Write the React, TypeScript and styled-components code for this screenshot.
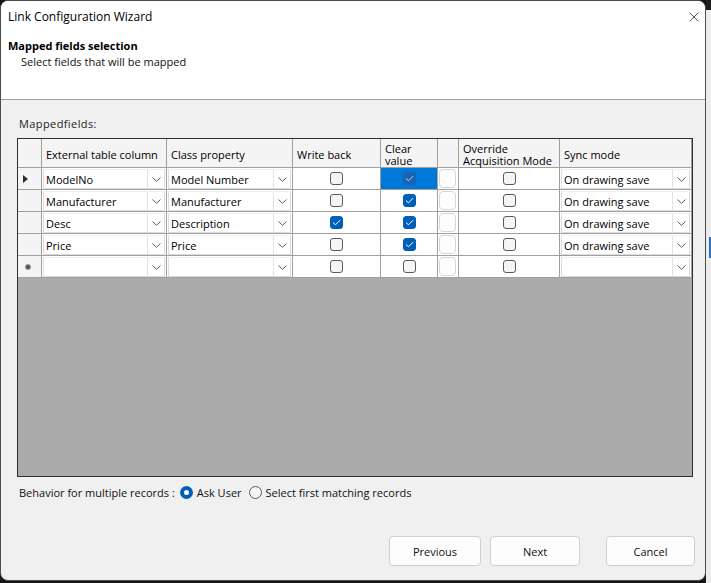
import React from 'react';
import styled, { createGlobalStyle } from 'styled-components';
import { X } from 'lucide-react';

const GlobalStyle = createGlobalStyle`
  html, body {
    margin: 0;
    padding: 0;
    background: #161616;
  }
  body {
    font-family: "Open Sans", "Noto Sans", sans-serif;
    color: #000;
  }
`;

// Page: the dialog plus a sliver of the desktop on the right
const Page = styled.div`
  display: flex;
  width: 711px;
  height: 583px;
  overflow: hidden;
`;

const Desktop = styled.div`
  flex: 1;
  position: relative;
  background: #ececec;
  border-top: 10px solid #1d1d1d;
`;

const DesktopMark = styled.div`
  position: absolute;
  top: 227px;
  left: 3px;
  width: 3px;
  height: 21px;
  background: #2a6fc9;
`;

const Window = styled.div`
  width: 706px;
  height: 581px;
  box-sizing: border-box;
  border: 1px solid #4c4c4c;
  border-radius: 8px;
  overflow: hidden;
  display: flex;
  flex-direction: column;
  background: #f0f0f0;
`;

const Top = styled.div`
  background: #fff;
  height: 98px;
  border-bottom: 1px solid #a0a0a0;
  display: flex;
  flex-direction: column;
`;

const TitleBar = styled.div`
  height: 31px;
  display: flex;
  align-items: center;
  justify-content: space-between;
  padding: 0 3px 0 7px;
  font-size: 12px;
`;

const Heading = styled.div`
  padding: 6px 0 0 7px;
  font-size: 11px;
  font-weight: 700;
  line-height: 16px;
`;

const SubHeading = styled.div`
  padding-left: 20px;
  font-size: 11px;
  line-height: 16px;
  color: #111;
`;

const Body = styled.div`
  flex: 1;
  display: flex;
  flex-direction: column;
  padding: 16px 10px 0 16px;
`;

const Label = styled.div`
  font-size: 11px;
  letter-spacing: 0.4px;
  color: #222;
  padding-left: 2px;
  line-height: 15px;
  margin-bottom: 7px;
`;

const Grid = styled.div`
  width: 676px;
  height: 339px;
  box-sizing: border-box;
  border: 1px solid #2e2e2e;
  background: #ababab;
  display: flex;
  flex-direction: column;
`;

const COLS = '24px 125px 126px 88px 57px 21px 101px 132px';

const Row = styled.div<{ $head?: boolean }>`
  display: grid;
  grid-template-columns: ${COLS};
  height: ${(p) => (p.$head ? 29 : 22)}px;
`;

const Cell = styled.div<{ $head?: boolean; $selected?: boolean; $center?: boolean }>`
  box-sizing: border-box;
  border-right: 1px solid #a0a0a0;
  border-bottom: 1px solid #a0a0a0;
  background: ${(p) => (p.$selected ? '#0078d7' : p.$head ? '#f4f4f4' : '#fff')};
  display: flex;
  align-items: center;
  justify-content: ${(p) => (p.$center ? 'center' : 'flex-start')};
  font-size: 11px;
  line-height: 12px;
  padding: ${(p) => (p.$head ? '3px 4px 0' : '0')};
`;

const RowHead = styled(Cell)`
  background: #f4f4f4;
  justify-content: flex-start;
  padding-left: 5px;
`;

const Arrow = styled.div`
  width: 0;
  height: 0;
  border-top: 4px solid transparent;
  border-bottom: 4px solid transparent;
  border-left: 5px solid #2b2b2b;
`;

const NewMark = styled.div`
  margin-left: 3px;
  width: 4px;
  height: 4px;
  border-radius: 50%;
  background: #555;
  box-shadow: 0 0 0 1px #999;
`;

const Combo = styled.div`
  flex: 1;
  align-self: stretch;
  margin: 1px 1px 0 1px;
  box-sizing: border-box;
  border: 1px solid #dcdcdc;
  border-top-color: #f0f0f0;
  background: #fff;
  display: flex;
  align-items: center;
`;

const ComboText = styled.span`
  flex: 1;
  padding: 1px 0 0 2px;
  font-size: 11px;
  line-height: 14px;
  white-space: nowrap;
`;

const ComboButton = styled.span`
  width: 16px;
  align-self: stretch;
  border-left: 1px solid #e2e2e2;
  display: flex;
  align-items: center;
  justify-content: center;
`;

const Check = styled.div<{ $on?: boolean; $sel?: boolean }>`
  width: 13px;
  height: 13px;
  box-sizing: border-box;
  border-radius: 3px;
  border: 1px solid ${(p) => (p.$sel ? '#1b63b5' : p.$on ? '#005fb8' : '#5a5a5a')};
  background: ${(p) => (p.$sel ? '#1b63b5' : p.$on ? '#005fb8' : '#f5f5f5')};
  display: flex;
  align-items: center;
  justify-content: center;
`;

const CellButton = styled.div`
  width: 17px;
  height: 19px;
  margin-left: 1px;
  box-sizing: border-box;
  border: 1px solid #d6d6d6;
  border-radius: 4px;
  background: #fdfdfd;
`;

const Empty = styled.div`
  flex: 1;
`;

const RadioRow = styled.div`
  display: flex;
  align-items: center;
  height: 16px;
  margin-top: 7px;
  padding-left: 2px;
  font-size: 11px;
  color: #111;
`;

const RadioItem = styled.label`
  display: flex;
  align-items: center;
  gap: 4px;
  margin-left: 7px;
  &:first-of-type {
    margin-left: 5px;
  }
`;

const Radio = styled.span<{ $on?: boolean }>`
  width: 13px;
  height: 13px;
  box-sizing: border-box;
  border-radius: 50%;
  border: ${(p) => (p.$on ? '4px solid #005fb8' : '1px solid #5a5a5a')};
  background: ${(p) => (p.$on ? '#fff' : '#f5f5f5')};
`;

const Footer = styled.div`
  display: flex;
  justify-content: flex-end;
  margin-top: 36px;
`;

const Button = styled.button<{ $w: number; $gap?: number }>`
  width: ${(p) => p.$w}px;
  height: 30px;
  margin-left: ${(p) => p.$gap ?? 0}px;
  border: 1px solid #d0d0d0;
  border-radius: 4px;
  background: #fdfdfd;
  font-family: "Open Sans", "Noto Sans", sans-serif;
  font-size: 11px;
  color: #111;
  padding: 0;
`;

const Tick = ({ color }: { color: string }) => (
  <svg width="9" height="7" viewBox="0 0 9 7">
    <path d="M1 3.6 L3.5 5.8 L8 1.2" fill="none" stroke={color} strokeWidth="1" />
  </svg>
);

const Chevron = () => (
  <svg width="9" height="5" viewBox="0 0 9 5">
    <path d="M0.5 0.5 L4.5 4.3 L8.5 0.5" fill="none" stroke="#5a5a5a" strokeWidth="1" />
  </svg>
);

type Rec = {
  ext: string;
  prop: string;
  write: boolean;
  clear: boolean;
  sync: string;
};

const rows: Rec[] = [
  { ext: 'ModelNo', prop: 'Model Number', write: false, clear: true, sync: 'On drawing save' },
  { ext: 'Manufacturer', prop: 'Manufacturer', write: false, clear: true, sync: 'On drawing save' },
  { ext: 'Desc', prop: 'Description', write: true, clear: true, sync: 'On drawing save' },
  { ext: 'Price', prop: 'Price', write: false, clear: true, sync: 'On drawing save' },
  { ext: '', prop: '', write: false, clear: false, sync: '' },
];

const ComboCell = ({ text }: { text: string }) => (
  <Cell>
    <Combo>
      <ComboText>{text}</ComboText>
      <ComboButton>
        <Chevron />
      </ComboButton>
    </Combo>
  </Cell>
);

const CheckCell = ({ on, sel }: { on: boolean; sel?: boolean }) => (
  <Cell $center $selected={sel}>
    <Check $on={on} $sel={sel}>
      {on && <Tick color={sel ? '#b9d4f2' : '#fff'} />}
    </Check>
  </Cell>
);

const App = () => {
  return (
    <Page>
      <GlobalStyle />
      <Window>
        <Top>
          <TitleBar>
            <span>Link Configuration Wizard</span>
            <X size={16} strokeWidth={1} />
          </TitleBar>
          <Heading>Mapped fields selection</Heading>
          <SubHeading>Select fields that will be mapped</SubHeading>
        </Top>
        <Body>
          <Label>Mappedfields:</Label>
          <Grid>
            <Row $head>
              <Cell $head />
              <Cell $head>External table column</Cell>
              <Cell $head>Class property</Cell>
              <Cell $head>Write back</Cell>
              <Cell $head>Clear value</Cell>
              <Cell $head />
              <Cell $head>Override Acquisition Mode</Cell>
              <Cell $head>Sync mode</Cell>
            </Row>
            {rows.map((r, i) => (
              <Row key={i}>
                <RowHead>
                  {i === 0 && <Arrow />}
                  {i === rows.length - 1 && <NewMark />}
                </RowHead>
                <ComboCell text={r.ext} />
                <ComboCell text={r.prop} />
                <CheckCell on={r.write} />
                <CheckCell on={r.clear} sel={i === 0} />
                <Cell>
                  <CellButton />
                </Cell>
                <CheckCell on={false} />
                <ComboCell text={r.sync} />
              </Row>
            ))}
            <Empty />
          </Grid>
          <RadioRow>
            <span>Behavior for multiple records :</span>
            <RadioItem>
              <Radio $on />
              Ask User
            </RadioItem>
            <RadioItem>
              <Radio />
              Select first matching records
            </RadioItem>
          </RadioRow>
          <Footer>
            <Button $w={92}>Previous</Button>
            <Button $w={90} $gap={9}>Next</Button>
            <Button $w={89} $gap={26}>Cancel</Button>
          </Footer>
        </Body>
      </Window>
      <Desktop>
        <DesktopMark />
      </Desktop>
    </Page>
  );
};

export default App;
